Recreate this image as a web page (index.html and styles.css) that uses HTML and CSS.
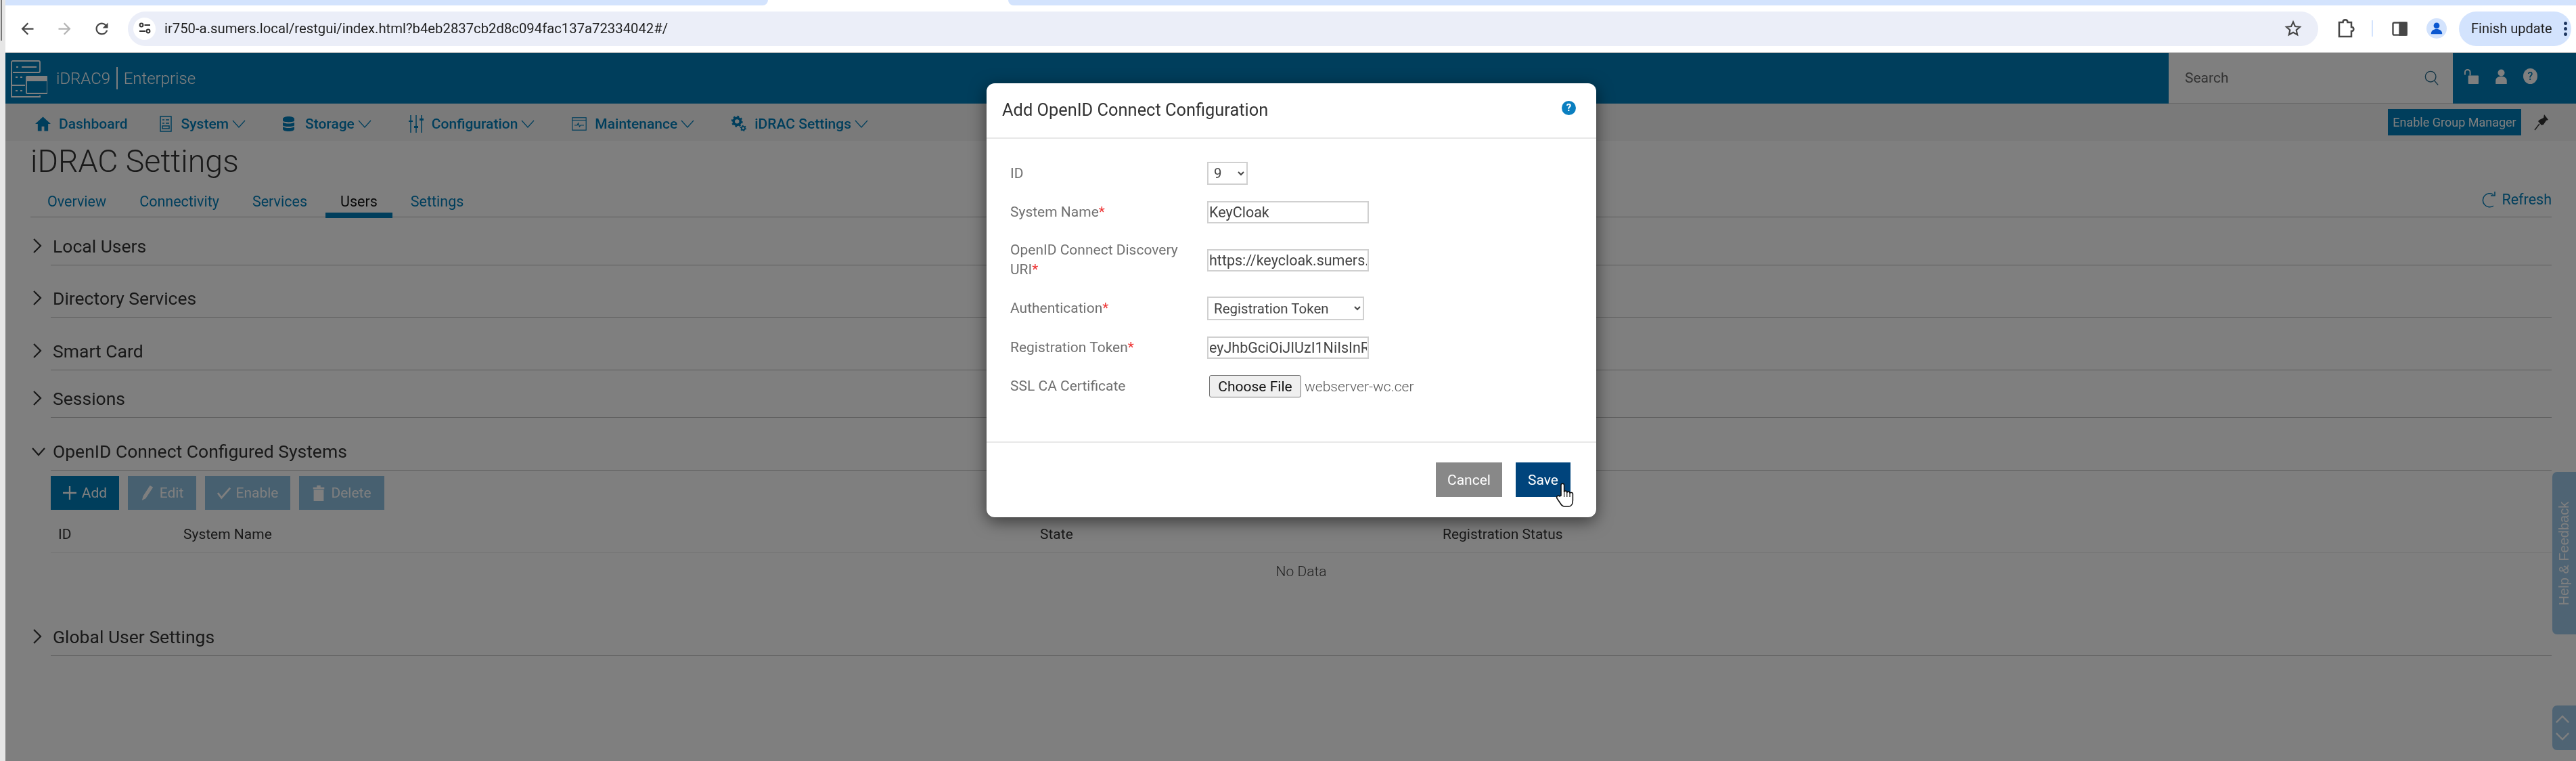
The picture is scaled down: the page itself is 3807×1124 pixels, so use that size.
FILE: index.html
```html
<!DOCTYPE html>
<html lang="en">
<head>
<meta charset="utf-8">
<title>iDRAC Settings</title>
<link rel="stylesheet" href="styles.css">
</head>
<body>
<div class="screen">
  <div class="gutter"><span class="gutter-line"></span></div>
  <div class="window">
    <div class="tabstrip"><span class="strip strip-left"></span><span class="strip-gap"></span><span class="strip strip-right"></span></div>
    <div class="toolbar">
      <svg class="tb-icon back" viewBox="0 0 24 24"><path d="M20 11H7.83l5.59-5.59L12 4l-8 8 8 8 1.41-1.41L7.83 13H20v-2z"/></svg>
      <svg class="tb-icon forward" viewBox="0 0 24 24"><path d="M4 11h12.17l-5.59-5.59L12 4l8 8-8 8-1.41-1.41L16.17 13H4v-2z"/></svg>
      <svg class="tb-icon reload" viewBox="0 0 24 24"><path d="M17.65 6.35A7.95 7.95 0 0 0 12 4c-4.42 0-7.99 3.58-7.99 8s3.57 8 7.99 8c3.73 0 6.84-2.55 7.73-6h-2.08A5.99 5.99 0 0 1 12 18c-3.31 0-6-2.69-6-6s2.69-6 6-6c1.66 0 3.14.69 4.22 1.78L13 11h7V4l-2.35 2.35z"/></svg>
      <div class="omnibox">
        <span class="site-chip"><svg class="tune" viewBox="0 0 20 20"><circle cx="5" cy="5" r="2.4"/><path d="M9.5 5H18M2 14h9"/><circle cx="15" cy="14" r="2.4"/></svg></span>
        <span class="url">ir750-a.sumers.local/restgui/index.html?b4eb2837cb2d8c094fac137a72334042#/</span>
        <svg class="star" viewBox="0 0 24 24"><path d="M12 3.2l2.7 6 6.5.7-4.9 4.3 1.4 6.4-5.7-3.3-5.7 3.3 1.4-6.4-4.9-4.3 6.5-.7z"/></svg>
      </div>
      <svg class="puzzle" viewBox="0 0 26 30"><path d="M3 6h5.5c0-5 7-5 7 0H21v7c4.500 0 4.500 6 0 6v8H3z"/></svg>
      <span class="tb-sep"></span>
      <svg class="sidepanel" viewBox="0 0 24 22"><rect x="1.500" y="1.500" width="21" height="19" rx="2"/><rect class="sp-fill" x="12" y="1.500" width="10.500" height="19"/></svg>
      <span class="avatar"><svg viewBox="0 0 24 24"><circle cx="12" cy="7.500" r="4.800"/><path d="M3 21c0-5.500 4-8 9-8s9 2.500 9 8z"/></svg></span>
      <div class="update"><span>Finish update</span><span class="dots"><i></i><i></i><i></i></span></div>
    </div>
    <div class="app">
      <header class="header">
        <svg class="logo" viewBox="0 0 54 56"><g fill="none" stroke="#fff" stroke-width="1.800"><path d="M1 18V3a2 2 0 0 1 2-2h38a2 2 0 0 1 2 2v13a2 2 0 0 1-2 2H3"/><path d="M1 18v36h42v-2"/><path d="M1 37h20M1 18v19"/><rect x="23" y="24" width="31" height="25" rx="1"/></g><path d="M23 24h31v7H23z" fill="#fff"/><path d="M8 10h3M16 10h22M7 25h3M14 25h3M7 45h3M14 45h3" stroke="#fff" stroke-width="2"/></svg>
        <span class="brand">iDRAC9</span><span class="brand-sep"></span><span class="brand">Enterprise</span>
        <div class="search"><span>Search</span><svg class="search-icon" viewBox="0 0 24 24"><circle cx="10" cy="10" r="8.500"/><path d="M16 16.500l6 7"/></svg></div>
        <svg class="h-icon lock" viewBox="0 0 24 24"><path d="M2 10V6a4 4 0 0 1 8 0v5" fill="none" stroke="#fff" stroke-width="2"/><rect x="7" y="11" width="16" height="13" rx="1" fill="#fff"/></svg>
        <svg class="h-icon user" viewBox="0 0 20 24"><circle cx="10" cy="6" r="5.500" fill="#fff"/><path d="M1 24v-5c0-5 4-7 9-7s9 2 9 7v5z" fill="#fff"/></svg>
        <span class="h-help">?</span>
      </header>
      <nav class="nav">
        <a class="nav-item nav-first"><svg class="ni home" viewBox="0 0 24 24"><path d="M12 1L0 12h4v11h6v-7h4v7h6V12h4z"/></svg><span>Dashboard</span></a>
        <a class="nav-item"><svg class="ni sys" viewBox="0 0 18 24"><rect x="1" y="1" width="16" height="22" fill="none" stroke="#007db8" stroke-width="1.500"/><path d="M4 6h3M9 6h5M4 11h3M9 11h5M4 15h10v4H4z" stroke="#007db8" stroke-width="1.500" fill="none"/></svg><span>System</span><svg class="chev" viewBox="0 0 20 12"><path d="M1 1l9 10 9-10"/></svg></a>
        <a class="nav-item"><svg class="ni store" viewBox="0 0 18 24"><path d="M0 4c0-5 18-5 18 0v3c0 3-18 3-18 0zM0 9.500c4 2.500 14 2.500 18 0V14c0 3-18 3-18 0zM0 16.500c4 2.500 14 2.500 18 0V20c0 5-18 5-18 0z"/></svg><span>Storage</span><svg class="chev" viewBox="0 0 20 12"><path d="M1 1l9 10 9-10"/></svg></a>
        <a class="nav-item"><svg class="ni conf" viewBox="0 0 22 26"><path d="M3 0v26M11 0v26M19 0v26" stroke="#007db8" stroke-width="1.500"/><path d="M0 8h6v2H0zM8 16h6v3H8zM16 5h6v3h-6z"/></svg><span>Configuration</span><svg class="chev" viewBox="0 0 20 12"><path d="M1 1l9 10 9-10"/></svg></a>
        <a class="nav-item"><svg class="ni maint" viewBox="0 0 22 20"><rect x=".8" y=".8" width="20.400" height="18.400" fill="none" stroke="#007db8" stroke-width="1.200"/><path d="M.8 4.500h20.400" stroke="#007db8" stroke-width="1.200"/><path d="M4 12h4l1.500-3 2 5 1.500-2h5" fill="none" stroke="#007db8" stroke-width="1.200"/></svg><span>Maintenance</span><svg class="chev" viewBox="0 0 20 12"><path d="M1 1l9 10 9-10"/></svg></a>
        <a class="nav-item"><svg class="ni gear" viewBox="0 0 24 26"><circle cx="9" cy="9" r="5.500" fill="none" stroke="#007db8" stroke-width="4"/><circle cx="9" cy="9" r="8" fill="none" stroke="#007db8" stroke-width="2.500" stroke-dasharray="3 3.280"/><circle cx="19" cy="20" r="2.800" fill="none" stroke="#007db8" stroke-width="2"/><circle cx="19" cy="20" r="4.300" fill="none" stroke="#007db8" stroke-width="1.500" stroke-dasharray="2 2.500"/></svg><span>iDRAC Settings</span><svg class="chev" viewBox="0 0 20 12"><path d="M1 1l9 10 9-10"/></svg></a>
        <button class="group-btn">Enable Group Manager</button>
        <svg class="pin" viewBox="0 0 22 24"><path d="M1 23l7-9" stroke="#333" stroke-width="1.500"/><path d="M15 0l6 8-3 1-4 6-3 1-5-6 2-2 6-3z" fill="#333"/></svg>
      </nav>
      <main class="page">
        <h1 class="title">iDRAC Settings</h1>
        <div class="tabs">
          <a class="tab tab-first">Overview</a><a class="tab">Connectivity</a><a class="tab">Services</a><a class="tab tab-active">Users</a><a class="tab">Settings</a>
          <a class="refresh"><svg class="refresh-icon" viewBox="0 0 20 28"><path d="M17 6.500A10 10 0 1 0 17 23" fill="none" stroke="#007db8" stroke-width="1.500"/><path d="M13 8h6V2" fill="none" stroke="#007db8" stroke-width="1.500"/></svg>Refresh</a>
        </div>
        <div class="section sec-first"><svg class="caret" viewBox="0 0 14 24"><path d="M2 2l10 10L2 22"/></svg><div class="sec-head">Local Users</div></div>
        <div class="section sec-36"><svg class="caret" viewBox="0 0 14 24"><path d="M2 2l10 10L2 22"/></svg><div class="sec-head">Directory Services</div></div>
        <div class="section"><svg class="caret" viewBox="0 0 14 24"><path d="M2 2l10 10L2 22"/></svg><div class="sec-head">Smart Card</div></div>
        <div class="section sec-tight"><svg class="caret" viewBox="0 0 14 24"><path d="M2 2l10 10L2 22"/></svg><div class="sec-head">Sessions</div></div>
        <div class="section"><svg class="caret caret-open" viewBox="0 0 20 14"><path d="M1 2l9 10 9-10"/></svg><div class="sec-head">OpenID Connect Configured Systems</div></div>
        <div class="sec-body">
          <div class="actions">
            <button class="act act-add"><svg class="act-icon" viewBox="0 0 22 22"><path d="M11 0v22M0 11h22" stroke="#fff" stroke-width="2.500"/></svg>Add</button>
            <button class="act act-off"><svg class="act-icon" viewBox="0 0 22 26"><path d="M4 18L15 1l5 3L8 22l-6 3z" fill="#fff"/></svg>Edit</button>
            <button class="act act-off act-wide"><svg class="act-icon" viewBox="0 0 22 20"><path d="M1 10l6 8L21 2" fill="none" stroke="#fff" stroke-width="3"/></svg>Enable</button>
            <button class="act act-off act-wide"><svg class="act-icon" viewBox="0 0 20 26"><path d="M1 4h18v3H1zM7 1h6v3H7zM2 8h16v18H2z" fill="#fff"/></svg>Delete</button>
          </div>
          <div class="thead"><span>ID</span><span>System Name</span><span>State</span><span>Registration Status</span></div>
          <div class="nodata">No Data</div>
        </div>
        <div class="section sec-last"><svg class="caret" viewBox="0 0 14 24"><path d="M2 2l10 10L2 22"/></svg><div class="sec-head">Global User Settings</div></div>
      </main>
      <div class="help-tab"><span>Help &amp; Feedback</span></div>
      <div class="scroller"><svg viewBox="0 0 24 14"><path d="M2 12L12 2l10 10"/></svg><svg viewBox="0 0 24 14"><path d="M2 2l10 10L22 2"/></svg></div>
      <div class="backdrop"></div>
    </div>
    <div class="modal">
      <div class="modal-head"><h2>Add OpenID Connect Configuration</h2><span class="modal-help">?</span></div>
      <form class="modal-body">
        <label class="lbl">ID</label><select class="ctl sel-id"><option>9</option></select>
        <label class="lbl">System Name<em>*</em></label><input class="ctl txt" value="KeyCloak">
        <label class="lbl"><span class="lbl-line">OpenID Connect Discovery</span><span class="lbl-line">URI<em>*</em></span></label><input class="ctl txt" value="https://keycloak.sumers.local/realms/idrac">
        <label class="lbl">Authentication<em>*</em></label><select class="ctl sel-auth"><option>Registration Token</option></select>
        <label class="lbl">Registration Token<em>*</em></label><input class="ctl txt" value="eyJhbGciOiJIUzI1NiIsInR5cCI6IkpXVCJ9">
        <label class="lbl">SSL CA Certificate</label><div class="file"><button type="button" class="file-btn">Choose File</button><span>webserver-wc.cer</span></div>
      </form>
      <div class="modal-foot">
        <button class="m-btn cancel">Cancel</button>
        <button class="m-btn save">Save</button>
        <svg class="hand" viewBox="0 0 28 38"><path d="M8 20V4.500a2.300 2.300 0 0 1 4.600 0V15c0-2.500 4.200-2.500 4.200 0v1c0-2.500 4.200-2.500 4.200 0v1c0-2 4.400-2 4.400.5V27c0 5-2 9-6 9h-6c-3 0-4.500-1.500-6-4L2 24c-1.500-3 2-5 4-3z" fill="#fff" stroke="#111" stroke-width="1.600"/><path d="M12.600 15v7M16.800 16v6M21 17v5" stroke="#111" stroke-width="1.200"/></svg>
      </div>
    </div>
  </div>
</div>
</body>
</html>
```
FILE: styles.css
```css
* { box-sizing: border-box; }
html, body { margin: 0; padding: 0; }
body { width: 3807px; height: 1124px; overflow: hidden; background: #fff; font-family: Roboto, "Liberation Sans", sans-serif; }
.screen { display: flex; width: 3807px; height: 1124px; filter: blur(0.55px); position: relative; }
.gutter { width: 8px; background: #e6e6e6; flex: none; position: relative; }
.gutter-line { display: block; width: 2px; height: 60px; background: #777; margin-left: 1px; }
.window { flex: 1; display: flex; flex-direction: column; min-width: 0; }
.tabstrip { display: flex; height: 8px; flex: none; }
.strip { background: #d3e3fd; height: 8px; }
.strip-left { width: 1127px; border-bottom-right-radius: 8px; }
.strip-gap { width: 355px; }
.strip-right { flex: 1; border-bottom-left-radius: 8px; }
.toolbar { height: 70px; flex: none; display: flex; align-items: center; background: #fff; border-bottom: 1px solid #c8c8c8; border-top-left-radius: 10px; padding-bottom: 1px; }
.tb-icon { width: 27px; height: 27px; flex: none; fill: #474747; }
.back { margin-left: 19px; }
.forward { margin-left: 28px; fill: #b4b4b4; }
.reload { margin-left: 28px; }
.omnibox { margin-left: 25px; width: 3237px; height: 51px; border-radius: 26px; background: #ebeef8; display: flex; align-items: center; padding-left: 8px; padding-right: 24px; }
.site-chip { width: 33px; height: 33px; border-radius: 50%; background: #fff; display: flex; align-items: center; justify-content: center; flex: none; }
.tune { width: 20px; height: 20px; fill: none; stroke: #333; stroke-width: 2; }
.url { margin-left: 13px; font-size: 20.300px; color: #1f1f1f; white-space: nowrap; }
.star { margin-left: auto; width: 26px; height: 26px; fill: none; stroke: #474747; stroke-width: 2; }
.puzzle { width: 26px; height: 30px; margin-left: 28px; fill: none; stroke: #474747; stroke-width: 2.500; flex: none; }
.tb-sep { width: 2px; height: 24px; background: #d3e3fd; margin-left: 25px; flex: none; }
.sidepanel { width: 23px; height: 21px; margin-left: 28px; fill: none; stroke: #474747; stroke-width: 2.500; flex: none; }
.sp-fill { fill: #474747; }
.avatar { width: 30px; height: 30px; border-radius: 50%; background: #d3e3fd; margin-left: 28px; display: flex; align-items: center; justify-content: center; flex: none; }
.avatar svg { width: 22px; height: 22px; fill: #0b57d0; }
.update { margin-left: 18px; width: 166px; height: 51px; border-radius: 26px; background: #d3e3fd; display: flex; align-items: center; padding-left: 18px; font-size: 20px; color: #1f1f1f; flex: none; }
.dots { margin-left: 17px; display: flex; flex-direction: column; gap: 3px; }
.dots i { display: block; width: 5px; height: 5px; border-radius: 50%; background: #1f3760; }
.app { position: relative; flex: 1; display: flex; flex-direction: column; background: #fff; min-height: 0; }
.backdrop { position: absolute; inset: 0; background: rgba(0,0,0,.5); }
.header { height: 75px; flex: none; background: #007db8; display: flex; align-items: center; padding: 0 57px 0 8px; color: #fff; }
.logo { width: 54px; height: 56px; flex: none; margin-right: 13px; margin-top: 3px; }
.brand { font-size: 24px; font-weight: 300; }
.brand-sep { width: 1.500px; height: 33px; background: #fff; margin: 0 9px; }
.search { margin-left: auto; width: 420px; height: 75px; background: #fff; border-bottom: 1px solid #ccc; display: flex; align-items: center; padding: 0 20px 0 24px; justify-content: space-between; color: #666; font-size: 21px; flex: none; }
.search-icon { width: 22px; height: 22px; fill: none; stroke: #2d6f90; stroke-width: 1.500; }
.h-icon { flex: none; }
.lock { width: 23px; height: 23px; margin-left: 16px; margin-bottom: 6px; }
.user { width: 19px; height: 22px; margin-left: 23px; margin-bottom: 6px; }
.h-help { width: 21px; height: 23px; border-radius: 50%; background: #fff; color: #007db8; margin-left: 23px; margin-bottom: 6px; font-size: 16px; font-weight: 500; text-align: center; line-height: 23px; flex: none; }
.nav { height: 55px; flex: none; background: #f5f5f5; display: flex; align-items: center; padding: 5px 40px 0 44px; }
.nav-item { display: flex; align-items: center; color: #007db8; font-size: 21px; font-weight: 500; margin-right: 55px; white-space: nowrap; }
.nav-first { margin-right: 47px; }
.ni { flex: none; margin-right: 12px; fill: #007db8; }
.home { width: 23px; height: 24px; }
.sys { width: 18px; height: 24px; margin-right: 14px; }
.store { width: 17px; height: 24px; margin-right: 16px; }
.conf { width: 22px; height: 26px; }
.maint { width: 22px; height: 20px; }
.gear { width: 22px; height: 26px; }
.chev { width: 20px; height: 12px; margin-left: 5px; fill: none; stroke: #007db8; stroke-width: 1.200; flex: none; }
.group-btn { margin-left: auto; width: 197px; height: 39px; margin-bottom: 5px; background: #007db8; color: #fff; border: 0; padding: 0; font: 400 18px Roboto, sans-serif; }
.pin { width: 22px; height: 24px; margin-left: 19px; margin-bottom: 5px; flex: none; }
.page { flex: 1; padding: 0 36px 0 37px; color: #333; }
.title { margin: 0; height: 64px; font-size: 46.500px; font-weight: 300; line-height: 61px; color: #333; }
.tabs { height: 49px; border-bottom: 1px solid #bbb; display: flex; align-items: flex-start; }
.tab { height: 50px; padding: 14px 22px 0; margin-right: 5px; font-size: 21.500px; line-height: 24px; color: #007db8; font-weight: 400; }
.tab-first { margin-left: 3px; }
.tab-active { color: #111; font-weight: 400; border-bottom: 8px solid #007db8; }
.refresh { margin-left: auto; display: flex; align-items: center; padding-top: 9px; font-size: 21.500px; line-height: 24px; color: #007db8; font-weight: 400; }
.refresh-icon { width: 20px; height: 28px; margin-right: 9px; }
.section { display: flex; margin-top: 37px; height: 41px; }
.sec-first { margin-top: 30px; }
.sec-36 { margin-top: 36px; }
.sec-tight { margin-top: 29px; }
.sec-last { margin-top: 57px; }
.caret { width: 14px; height: 24px; margin-left: 3px; margin-right: 13px; flex: none; fill: none; stroke: #333; stroke-width: 2.200; }
.caret-open { width: 20px; height: 14px; margin-left: 2px; margin-right: 8px; margin-top: 6px; }
.sec-head { flex: 1; height: 41px; padding-left: 3px; border-bottom: 1px solid #bbb; font-size: 26.500px; line-height: 25px; color: #333; font-weight: 400; }
.sec-body { margin-left: 30px; }
.actions { display: flex; gap: 13px; padding-top: 8px; }
.act { height: 50px; width: 101px; border: 0; padding: 0; color: #fff; display: flex; align-items: center; justify-content: center; gap: 8px; font: 400 21px Roboto, sans-serif; }
.act-add { background: #007db8; }
.act-off { background: #8ec0e0; opacity: 1; }
.act-wide { width: 126px; }
.act-icon { width: 20px; height: 24px; flex: none; }
.thead { height: 64px; border-bottom: 1px solid #e4e4e4; display: grid; grid-template-columns: 185px 1266px 595px 1fr; padding: 24px 0 0 11px; font-size: 21px; line-height: 24px; color: #333; }
.nodata { height: 54px; text-align: center; font-size: 21px; line-height: 54px; color: #444; font-weight: 300; }
.help-tab { position: absolute; right: 0; top: 619px; width: 35px; height: 240px; background: #9ec8e8; border-radius: 7px 0 0 7px; display: flex; align-items: center; justify-content: center; }
.help-tab span { transform: rotate(-90deg); white-space: nowrap; color: #fff; font: 400 20px "Liberation Sans", sans-serif; }
.scroller { position: absolute; right: 0; top: 964px; width: 35px; height: 66px; background: #9ec8e8; border-radius: 7px 0 0 7px; display: flex; flex-direction: column; align-items: center; justify-content: space-around; padding: 8px 0; }
.scroller svg { width: 22px; height: 13px; fill: none; stroke: #fff; stroke-width: 2.500; margin-right: 5px; }
.modal { position: absolute; left: 1458px; top: 123px; width: 901px; height: 641px; background: #fff; border-radius: 12px; box-shadow: 0 6px 24px rgba(0,0,0,.55); display: flex; flex-direction: column; color: #333; }
.modal-head { height: 82px; flex: none; border-bottom: 2px solid #e8e8e8; display: flex; padding: 23px 30px 0 23px; justify-content: space-between; }
.modal-head h2 { margin: 0; font-size: 25.400px; font-weight: 400; line-height: 32px; color: #333; }
.modal-help { width: 21px; height: 21px; border-radius: 50%; background: #0a7fc0; color: #fff; font-size: 15px; font-weight: 700; text-align: center; line-height: 21px; margin-top: 3px; }
.modal-body { flex: 1; display: grid; grid-template-columns: 291px 1fr; grid-template-rows: 34px 33px 60px 35px 33px 33px; row-gap: 24px; padding: 34px 0 0 35px; align-content: start; }
.lbl { font-size: 21px; line-height: 29px; color: #707070; font-weight: 400; align-self: center; }
.lbl em { color: #e33; font-style: normal; }
.lbl-line { display: block; white-space: nowrap; }
.ctl { justify-self: start; align-self: center; font: 400 21.500px Roboto, sans-serif; color: #444; background: #fff; border: 2px solid #d0d0d0; padding: 0 1px; height: 33px; width: 239px; }
.sel-id { width: 60px; height: 34px; padding-left: 4px; font-size: 20.500px; }
.sel-auth { width: 232px; height: 35px; padding-left: 4px; font-size: 20.500px; }
.file { display: flex; align-items: center; gap: 5px; margin-left: 3px; font-size: 21px; color: #555; font-weight: 300; }
.file-btn { width: 136px; height: 33px; padding: 0; background: #efefef; border: 1.500px solid #767676; border-radius: 3px; color: #111; font: 400 21px Roboto, sans-serif; }
.modal-foot { position: relative; height: 112px; flex: none; border-top: 2px solid #e8e8e8; display: flex; justify-content: flex-end; gap: 20px; padding: 29px 38px 0 0; }
.m-btn { height: 51px; border: 0; padding: 0; color: #fff; font: 400 21px Roboto, sans-serif; }
.cancel { width: 98px; background: #888; }
.save { width: 81px; background: #00447c; }
.hand { position: absolute; left: 841px; top: 58px; width: 28px; height: 38px; }
```
